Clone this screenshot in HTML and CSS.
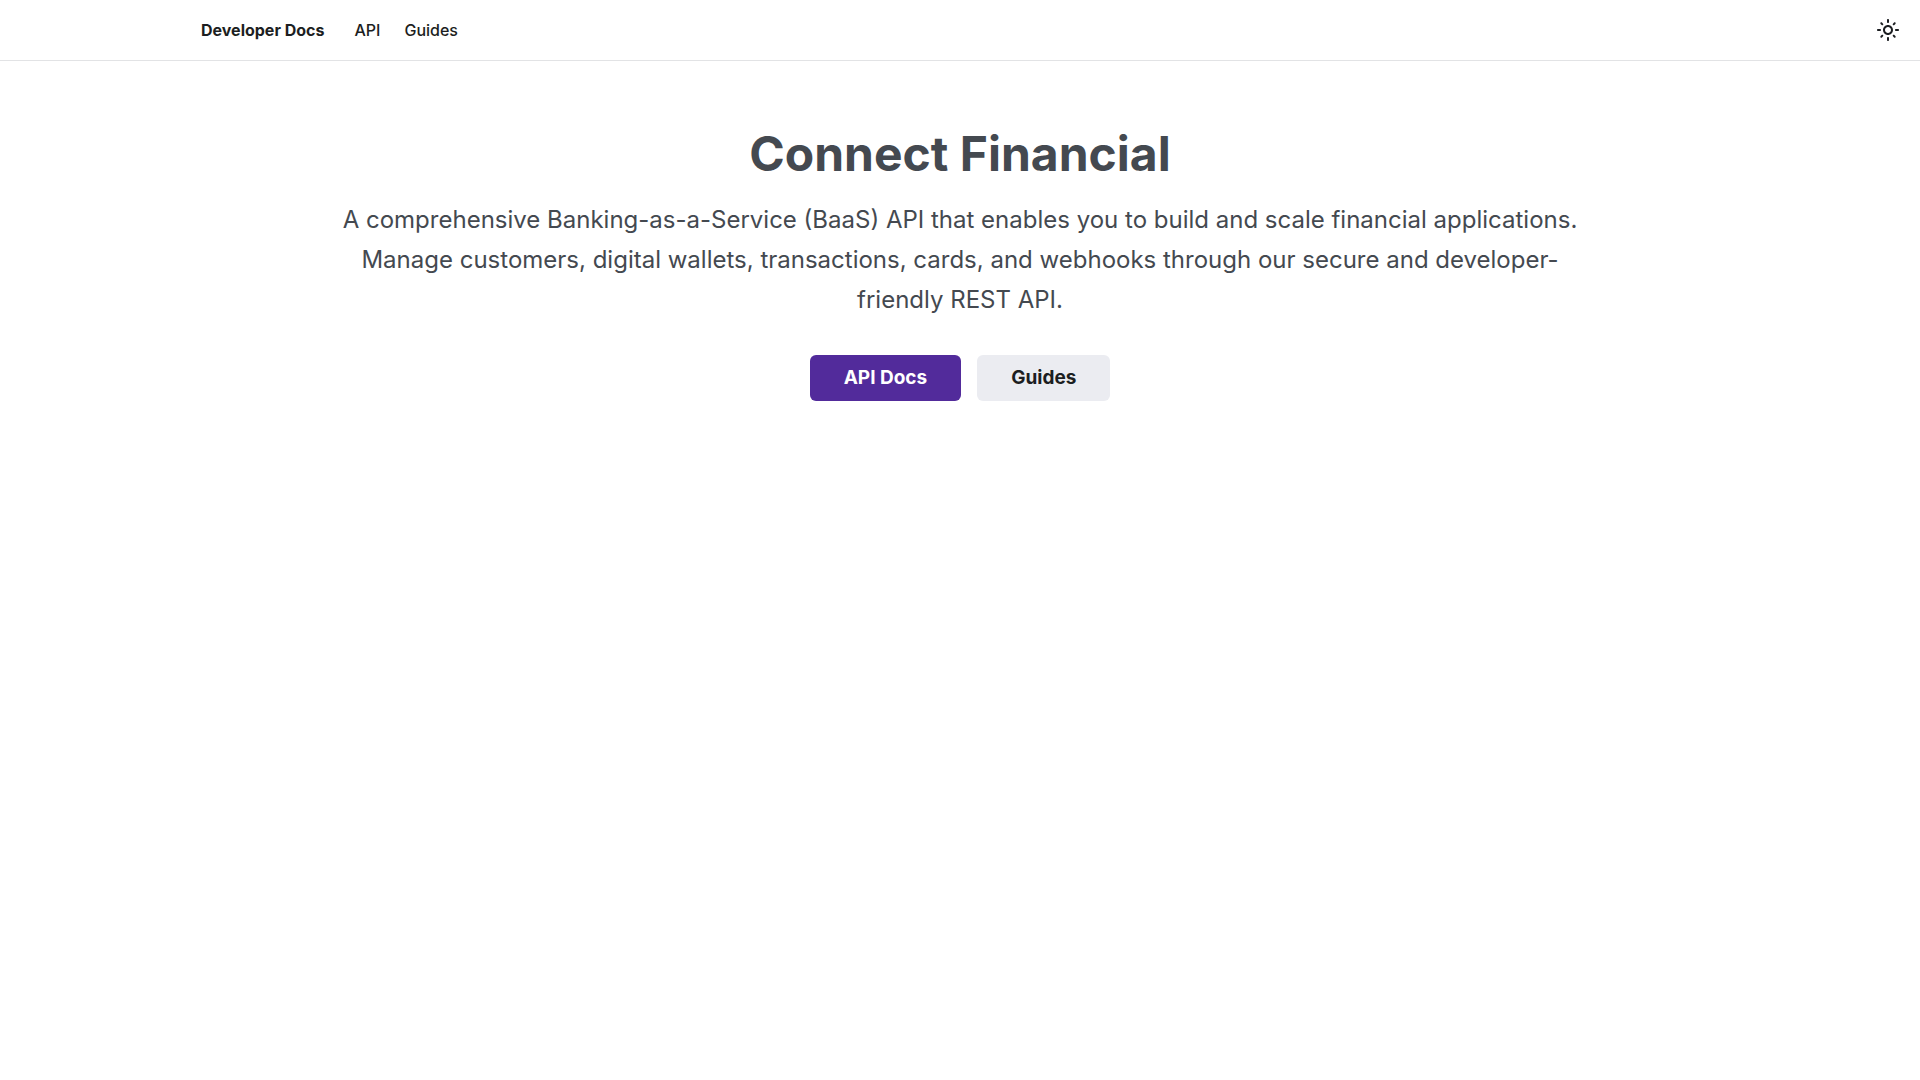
FILE: index.html
```html
<!DOCTYPE html>
<html lang="en">

<head>
  <meta charset="UTF-8">
  <meta name="viewport" content="width=device-width, initial-scale=1.0">
  <title>Developer Docs</title>
  <link rel="stylesheet" href="styles.css">
</head>

<body>
  <nav class="navbar">
    <div class="navbar-items">
      <a class="brand" href="/">Developer Docs</a>
      <a class="nav-link" href="/api">API</a>
      <a class="nav-link" href="/guides">Guides</a>
    </div>
    <button class="theme-toggle" type="button" aria-label="Switch between dark and light mode">
      <svg viewBox="0 0 24 24" width="24" height="24" aria-hidden="true">
        <path fill="currentColor" d="M12,9c1.65,0,3,1.35,3,3s-1.35,3-3,3s-3-1.35-3-3S10.35,9,12,9 M12,7c-2.76,0-5,2.24-5,5s2.24,5,5,5s5-2.24,5-5 S14.76,7,12,7L12,7z M2,13l2,0c0.55,0,1-0.45,1-1s-0.45-1-1-1l-2,0c-0.55,0-1,0.45-1,1S1.45,13,2,13z M20,13l2,0c0.55,0,1-0.45,1-1 s-0.45-1-1-1l-2,0c-0.55,0-1,0.45-1,1S19.45,13,20,13z M11,2v2c0,0.55,0.45,1,1,1s1-0.45,1-1V2c0-0.55-0.45-1-1-1S11,1.45,11,2z M11,20v2c0,0.55,0.45,1,1,1s1-0.45,1-1v-2c0-0.55-0.45-1-1-1C11.45,19,11,19.45,11,20z M5.99,4.58c-0.39-0.39-1.03-0.39-1.41,0 c-0.39,0.39-0.39,1.03,0,1.41l1.06,1.06c0.39,0.39,1.03,0.39,1.41,0s0.39-1.03,0-1.41L5.99,4.58z M18.36,16.95 c-0.39-0.39-1.03-0.39-1.41,0c-0.39,0.39-0.39,1.03,0,1.41l1.06,1.06c0.39,0.39,1.03,0.39,1.41,0c0.39-0.39,0.39-1.03,0-1.41 L18.36,16.95z M19.42,5.99c0.39-0.39,0.39-1.03,0-1.41c-0.39-0.39-1.03-0.39-1.41,0l-1.06,1.06c-0.39,0.39-0.39,1.03,0,1.41 s1.03,0.39,1.41,0L19.42,5.99z M7.05,18.36c0.39-0.39,0.39-1.03,0-1.41c-0.39-0.39-1.03-0.39-1.41,0l-1.06,1.06 c-0.39,0.39-0.39,1.03,0,1.41s1.03,0.39,1.41,0L7.05,18.36z"></path>
      </svg>
    </button>
  </nav>

  <main class="hero">
    <h1>Connect Financial</h1>
    <p>A comprehensive Banking-as-a-Service (BaaS) API that enables you to build and scale financial applications. Manage customers, digital wallets, transactions, cards, and webhooks through our secure and developer-friendly REST API.</p>
    <div class="buttons">
      <a class="button button-primary" href="/api">API Docs</a>
      <a class="button button-secondary" href="/guides">Guides</a>
    </div>
  </main>
</body>

</html>
```
FILE: styles.css
```css
body {
  font-family: Inter, sans-serif;
  margin: 0;
  color: #1c1e21;
  background-color: #fff;
}

a {
  text-decoration: none;
}

.navbar {
  display: flex;
  justify-content: space-between;
  align-items: center;
  height: 60px;
  padding: 0 16px 0 201px;
  border-bottom: 1px solid #e2e3e5;
}

.navbar-items {
  display: flex;
  align-items: center;
  gap: 24px;
  font-size: 16px;
}

.brand {
  margin-right: 6px;
  font-weight: 700;
  color: #1c1e21;
}

.nav-link {
  font-weight: 500;
  color: #1c1e21;
}

.theme-toggle {
  display: flex;
  align-items: center;
  justify-content: center;
  width: 32px;
  height: 32px;
  padding: 0;
  border: 0;
  background: none;
  color: #1c1e21;
  cursor: pointer;
}

.hero {
  max-width: 1280px;
  margin: 0 auto;
  padding: 64px 16px;
  text-align: center;
}

.hero h1 {
  margin: 0 0 17px;
  font-size: 48px;
  line-height: 58px;
  color: #444950;
}

.hero p {
  margin: 0 0 35px;
  font-size: 24px;
  line-height: 40px;
  color: #444950;
}

.buttons {
  display: flex;
  justify-content: center;
  gap: 16px;
}

.button {
  padding: 8px 34px;
  border-radius: 6px;
  font-size: 19px;
  font-weight: 700;
  line-height: 30px;
}

.button-primary {
  background-color: #522b9b;
  color: #fff;
}

.button-secondary {
  background-color: #ebecf1;
  color: #1c1e21;
}
```
